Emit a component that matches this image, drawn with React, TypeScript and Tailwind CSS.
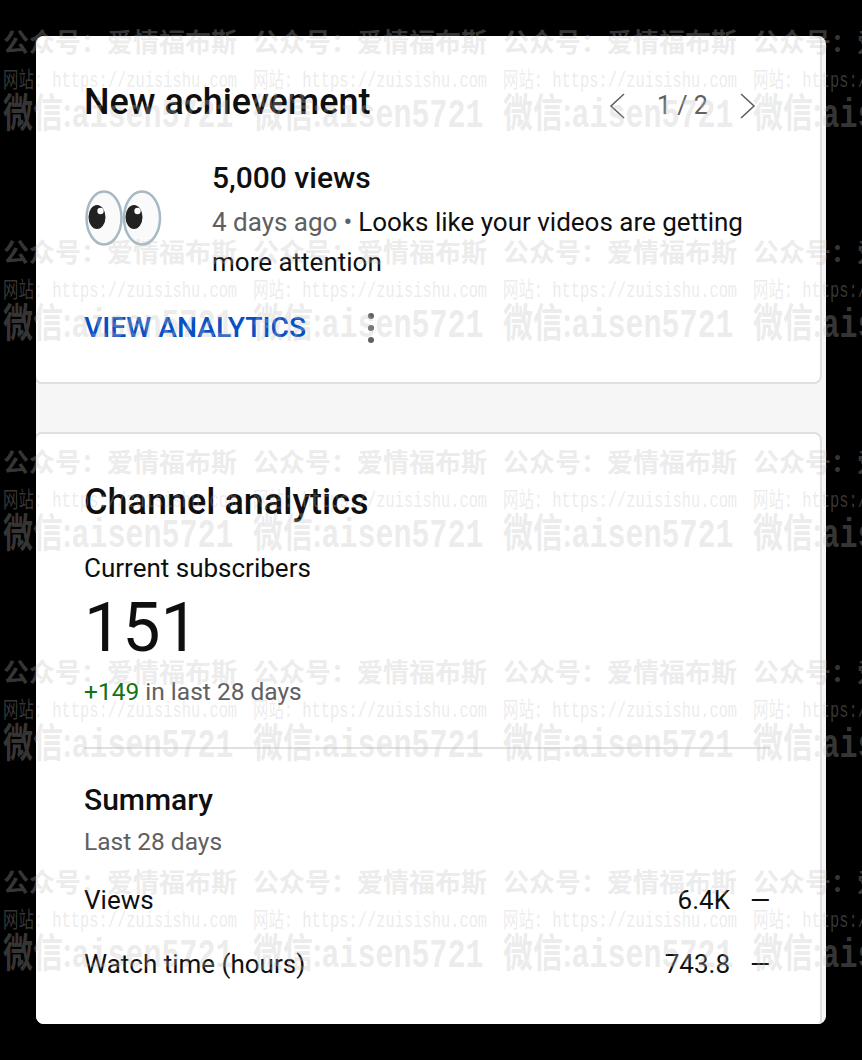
const rows = [0, 1, 2, 3, 4];
const cols = [0, 1, 2, 3];

function WatermarkTile() {
  return (
    <div className="w-[250px] h-[210px] shrink-0 overflow-visible text-[rgba(190,190,190,0.3)]">
      <div className="pt-[23px] h-[68px] text-[26px] leading-[36px] font-bold whitespace-nowrap font-['Noto_Sans_CJK_SC',sans-serif]">
        公众号：爱情福布斯
      </div>
      <div className="h-[26px] text-[22px] leading-[28px] whitespace-nowrap origin-left scale-x-[0.7] font-['Liberation_Mono','Noto_Sans_CJK_SC',monospace]">
        网站: https://zuisishu.com
      </div>
      <div className="text-[40px] leading-[40px] font-bold whitespace-nowrap origin-left scale-x-[0.75] font-['Liberation_Mono','Noto_Sans_CJK_SC',monospace]">
        微信<span className="font-['Roboto',sans-serif]">:</span>aisen5721
      </div>
    </div>
  );
}

function Watermark() {
  return (
    <div className="absolute inset-0 overflow-hidden pointer-events-none pl-[3px]">
      {rows.map((r) => (
        <div key={r} className="flex">
          {cols.map((c) => (
            <WatermarkTile key={c} />
          ))}
        </div>
      ))}
    </div>
  );
}

function EyesIcon() {
  return (
    <svg width="78" height="58" viewBox="0 0 78 58" fill="none">
      <ellipse cx="19" cy="29" rx="17.5" ry="26.5" fill="#fafafa" stroke="#a6bac4" strokeWidth="2.5" />
      <ellipse cx="57" cy="29" rx="18" ry="26.5" fill="#fafafa" stroke="#a6bac4" strokeWidth="2.5" />
      <ellipse cx="12" cy="28" rx="8.5" ry="12" fill="#212121" />
      <ellipse cx="49" cy="28" rx="8.5" ry="12" fill="#212121" />
      <circle cx="15.5" cy="22" r="3.2" fill="#fafafa" />
      <circle cx="52.5" cy="22" r="3.2" fill="#fafafa" />
    </svg>
  );
}

function Chevron({ dir }: { dir: "left" | "right" }) {
  return (
    <svg width="16" height="26" viewBox="0 0 16 26" fill="none" stroke="#606060" strokeWidth="1.6">
      {dir === "left" ? <path d="M15 1 L2 13 L15 25" /> : <path d="M1 1 L14 13 L1 25" />}
    </svg>
  );
}

export default function App() {
  return (
    <div className="relative w-[862px] h-[1060px] bg-black pt-[36px] pl-[36px] font-['Roboto',sans-serif] text-[#0f0f0f]">
      <div className="w-[790px] h-[988px] rounded-lg overflow-hidden bg-[#f6f6f6]">
        <div className="-ml-[2px] -mt-[2px] mr-[4px] flex flex-col gap-[48px]">
          {/* New achievement card */}
          <section className="h-[350px] rounded-lg border-2 border-[#e0e0e0] bg-white pl-[48px]">
            <div className="flex items-start justify-between pt-[42px] pr-[64px]">
              <h2 className="text-[36px] leading-[48px] font-medium">New achievement</h2>
              <div className="flex items-center pt-[9px] text-[25px] text-[#606060]">
                <Chevron dir="left" />
                <span className="w-[115px] text-center">1 / 2</span>
                <Chevron dir="right" />
              </div>
            </div>
            <div className="flex mt-[34px]">
              <div className="w-[128px] shrink-0 pt-[29px] pl-[1px]">
                <EyesIcon />
              </div>
              <div className="w-[560px]">
                <div className="text-[30px] leading-[36px] font-medium">5,000 views</div>
                <p className="mt-[6px] text-[26px] leading-[40px]">
                  <span className="text-[#606060]">4 days ago</span>
                  <span className="text-[#606060] mx-[6px]">•</span>
                  Looks like your videos are getting more attention
                </p>
              </div>
            </div>
            <div className="flex items-center mt-[26px]">
              <a className="w-[284px] text-[28.3px] leading-[40px] font-medium text-[#064fc4]">VIEW ANALYTICS</a>
              <div className="flex flex-col gap-[6px]">
                <span className="w-[6px] h-[6px] rounded-full bg-[#606060]" />
                <span className="w-[6px] h-[6px] rounded-full bg-[#606060]" />
                <span className="w-[6px] h-[6px] rounded-full bg-[#606060]" />
              </div>
            </div>
          </section>

          {/* Channel analytics card */}
          <section className="h-[596px] rounded-lg border-2 border-[#e0e0e0] bg-white pl-[48px] pr-[50px]">
            <h2 className="mt-[44px] text-[36px] leading-[48px] font-medium">Channel analytics</h2>
            <div className="mt-[24px] text-[26px] leading-[36px]">Current subscribers</div>
            <div className="mt-[2px] text-[68px] leading-[80px]">151</div>
            <div className="mt-[6px] text-[24.5px] leading-[36px] text-[#606060]">
              <span className="text-[#107516]">+149</span> in last 28 days
            </div>
            <div className="mt-[37px] h-[2px] bg-[#e0e0e0]" />
            <h3 className="mt-[31px] text-[30px] leading-[40px] font-medium">Summary</h3>
            <div className="mt-[2px] text-[24.5px] leading-[40px] text-[#606060]">Last 28 days</div>
            <div className="mt-[18px] flex items-center text-[26px] leading-[40px]">
              <span>Views</span>
              <span className="ml-auto">6.4K</span>
              <span className="ml-[20px] w-[20px]">—</span>
            </div>
            <div className="mt-[24px] flex items-center text-[26px] leading-[40px]">
              <span>Watch time (hours)</span>
              <span className="ml-auto">743.8</span>
              <span className="ml-[20px] w-[20px]">—</span>
            </div>
          </section>
        </div>
      </div>
      <Watermark />
    </div>
  );
}
